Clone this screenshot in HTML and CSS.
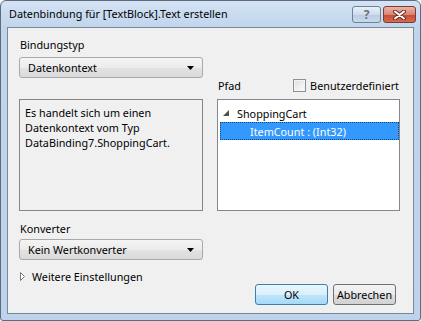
FILE: index.html
```html
<!DOCTYPE html>
<html lang="de">
<head>
    <meta charset="UTF-8">
    <title>Datenbindung</title>
    <link rel="stylesheet" href="styles.css">
</head>
<body>
    <div class="window">
        <div class="titlebar">
            <span class="title">Datenbindung für [TextBlock].Text erstellen</span>
            <div class="caption-buttons">
                <span class="caption-btn help">?</span>
                <span class="caption-btn close">
                    <svg width="13" height="10" viewBox="0 0 13 10">
                        <path d="M2 1.5 L11 8.5 M11 1.5 L2 8.5" stroke="#6a2c22" stroke-width="4" stroke-linecap="round"/>
                        <path d="M2 1.5 L11 8.5 M11 1.5 L2 8.5" stroke="#fff" stroke-width="2" stroke-linecap="round"/>
                    </svg>
                </span>
            </div>
        </div>

        <div class="client">
            <div class="columns">
                <div class="col col-left">
                    <div class="label">Bindungstyp</div>
                    <div class="combo">
                        <span>Datenkontext</span>
                        <svg class="arrow" width="7" height="4" viewBox="0 0 7 4"><path d="M0 0 H7 L3.5 4 Z" fill="#000"/></svg>
                    </div>
                    <div class="infobox">Es handelt sich um einen<br>Datenkontext vom Typ<br>DataBinding7.ShoppingCart.</div>
                </div>
                <div class="col col-right">
                    <div class="path-header">
                        <span>Pfad</span>
                        <span class="check"><span class="checkbox"></span>Benutzerdefiniert</span>
                    </div>
                    <div class="tree">
                        <div class="tree-row">
                            <svg class="expander" width="6" height="6" viewBox="0 0 6 6"><path d="M6 0 V6 H0 Z" fill="#4d4d4d"/></svg>
                            ShoppingCart
                        </div>
                        <div class="tree-row child selected">ItemCount : (Int32)</div>
                    </div>
                </div>
            </div>

            <div class="label converter-label">Konverter</div>
            <div class="combo">
                <span>Kein Wertkonverter</span>
                <svg class="arrow" width="7" height="4" viewBox="0 0 7 4"><path d="M0 0 H7 L3.5 4 Z" fill="#000"/></svg>
            </div>

            <div class="more">
                <svg width="5" height="9" viewBox="0 0 5 9"><path d="M0.5 0.5 L4.5 4.5 L0.5 8.5 Z" fill="#fff" stroke="#7a7a7a"/></svg>
                Weitere Einstellungen
            </div>

            <div class="actions">
                <span class="button default">OK</span>
                <span class="button">Abbrechen</span>
            </div>
        </div>
    </div>
</body>
</html>
```

FILE: styles.css
```css
* {
  box-sizing: border-box;
}

body {
  margin: 0;
  background: #ffffff;
  font-family: "Noto Sans", "Open Sans", sans-serif;
  font-size: 10.8px;
  color: #000;
}

.window {
  width: 421px;
  height: 321px;
  border: 1px solid #5c6c7e;
  border-radius: 6px 6px 3px 3px;
  background: linear-gradient(#d5e3f4, #c0d5ec 26px, #bdd3eb);
  display: flex;
  flex-direction: column;
}

/* title bar */
.titlebar {
  height: 26px;
  display: flex;
  justify-content: space-between;
  align-items: flex-start;
  padding: 0 4px 0 8px;
}

.title {
  margin-top: 6px;
  line-height: 14px;
}

.caption-buttons {
  display: flex;
  gap: 2px;
  margin-top: 5px;
}

.caption-btn {
  height: 17px;
  border: 1px solid #6f8196;
  border-radius: 3px;
  display: flex;
  align-items: center;
  justify-content: center;
}

.help {
  width: 29px;
  background: linear-gradient(#e8eff8, #cfdcec 50%, #b8cbe1 51%, #cbdaeb);
  color: #68727e;
  font-weight: bold;
  font-size: 12px;
}

.close {
  width: 33px;
  border-color: #7e3b30;
  background: linear-gradient(#eab4a9, #db8471 50%, #c74a33 51%, #d56b52);
}

/* client area */
.client {
  flex: 1;
  margin: 0 6px 6px;
  border: 1px solid #7b8996;
  background: #f0f0f0;
  padding: 9px 13px 0 11px;
  display: flex;
  flex-direction: column;
}

.columns {
  display: flex;
  gap: 14px;
}

.col {
  display: flex;
  flex-direction: column;
}

.col-left {
  width: 184px;
}

.col-right {
  width: 183px;
  justify-content: flex-end;
}

.label {
  line-height: 15px;
  padding-left: 1px;
}

.combo {
  width: 184px;
  height: 21px;
  margin-top: 5px;
  border: 1px solid #a9a9a9;
  border-radius: 3px;
  background: linear-gradient(#f4f4f4, #ececec 50%, #e2e2e2 51%, #dadada);
  display: flex;
  align-items: center;
  justify-content: space-between;
  padding: 0 8px 0 8px;
}

.infobox {
  height: 112px;
  margin-top: 21px;
  border: 1px solid #858585;
  background: #f0f0f0;
  padding: 5px 5px;
  line-height: 15px;
}

.path-header {
  display: flex;
  justify-content: space-between;
  align-items: center;
  height: 13px;
  margin-bottom: 7px;
  padding: 0 1px;
}

.check {
  display: flex;
  align-items: center;
  gap: 4px;
}

.checkbox {
  width: 13px;
  height: 13px;
  border: 1px solid #8e8f8f;
  background: linear-gradient(135deg, #dcdcdc, #ffffff);
  box-shadow: inset 0 0 0 1px #f4f4f4;
}

.tree {
  height: 112px;
  border: 1px solid #828790;
  background: #ffffff;
  padding: 4px 0 0 2px;
}

.tree-row {
  height: 18px;
  display: flex;
  align-items: center;
  padding-left: 3px;
}

.expander {
  margin-right: 8px;
}

.tree-row.child {
  padding-left: 30px;
}

.tree-row.selected {
  background: #3399ff;
  color: #ffffff;
  outline: 1px dotted #16487e;
  outline-offset: -1px;
}

.converter-label {
  margin-top: 10px;
}

.client > .combo {
  margin-top: 3px;
}

.more {
  display: flex;
  align-items: center;
  gap: 7px;
  line-height: 15px;
  margin-top: 9px;
  padding-left: 1px;
}

.actions {
  display: flex;
  justify-content: flex-end;
  gap: 5px;
  padding-right: 4px;
}

.button {
  width: 63px;
  height: 21px;
  border: 1px solid #707070;
  border-radius: 3px;
  background: linear-gradient(#f3f3f3, #ebebeb 50%, #dddddd 51%, #d2d2d2);
  display: flex;
  align-items: center;
  justify-content: center;
}

.button.default {
  width: 73px;
  border-color: #3c7fb1;
  background: linear-gradient(#eaf6fd, #d9f0fc 50%, #bee6fd 51%, #a7d9f5);
}
```
